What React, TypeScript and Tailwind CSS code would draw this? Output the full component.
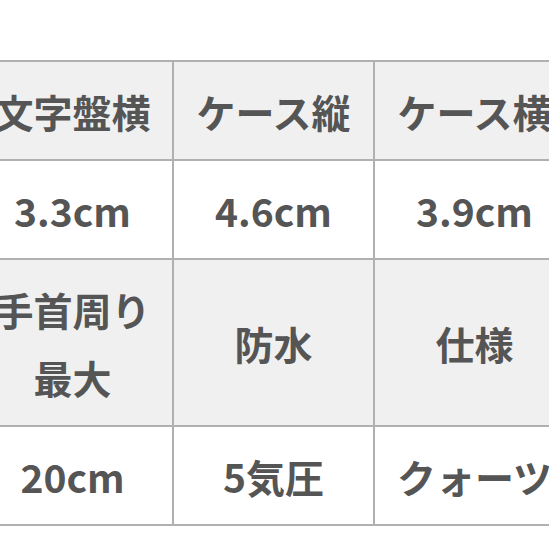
const rows: { head: string[]; body: string[] }[] = [
  { head: ["文字盤横", "ケース縦", "ケース横"], body: ["3.3cm", "4.6cm", "3.9cm"] },
  { head: ["手首周り最大", "防水", "仕様"], body: ["20cm", "5気圧", "クォーツ"] },
];

export default function App() {
  return (
    <div className="h-[549px] w-[549px] overflow-hidden bg-white pt-[60px] font-['Noto_Sans_CJK_JP',sans-serif]">
      <table className="-ml-[29px] w-[605px] table-fixed border-collapse border-2 border-[#b0b0b0] text-center text-[39px] font-bold text-[#555]">
        <colgroup>
          <col className="w-[201px]" />
          <col className="w-[201px]" />
          <col className="w-[201px]" />
        </colgroup>
        <tbody>
          {rows.map((r, i) => (
            <>
              <tr key={`h${i}`} className="bg-[#f0f0f0]">
                {r.head.map((t) => (
                  <td
                    key={t}
                    className="whitespace-nowrap border-2 border-[#b0b0b0] px-3 pt-[15px] pb-[14px] leading-[68px]"
                  >
                    {t === "手首周り最大" ? (
                      <>
                        手首周り
                        <br />
                        最大
                      </>
                    ) : (
                      t
                    )}
                  </td>
                ))}
              </tr>
              <tr key={`b${i}`} className="bg-white">
                {r.body.map((t) => (
                  <td
                    key={t}
                    className="whitespace-nowrap border-2 border-[#b0b0b0] px-3 pt-[15px] pb-[14px] leading-[68px]"
                  >
                    {t}
                  </td>
                ))}
              </tr>
            </>
          ))}
        </tbody>
      </table>
    </div>
  );
}
